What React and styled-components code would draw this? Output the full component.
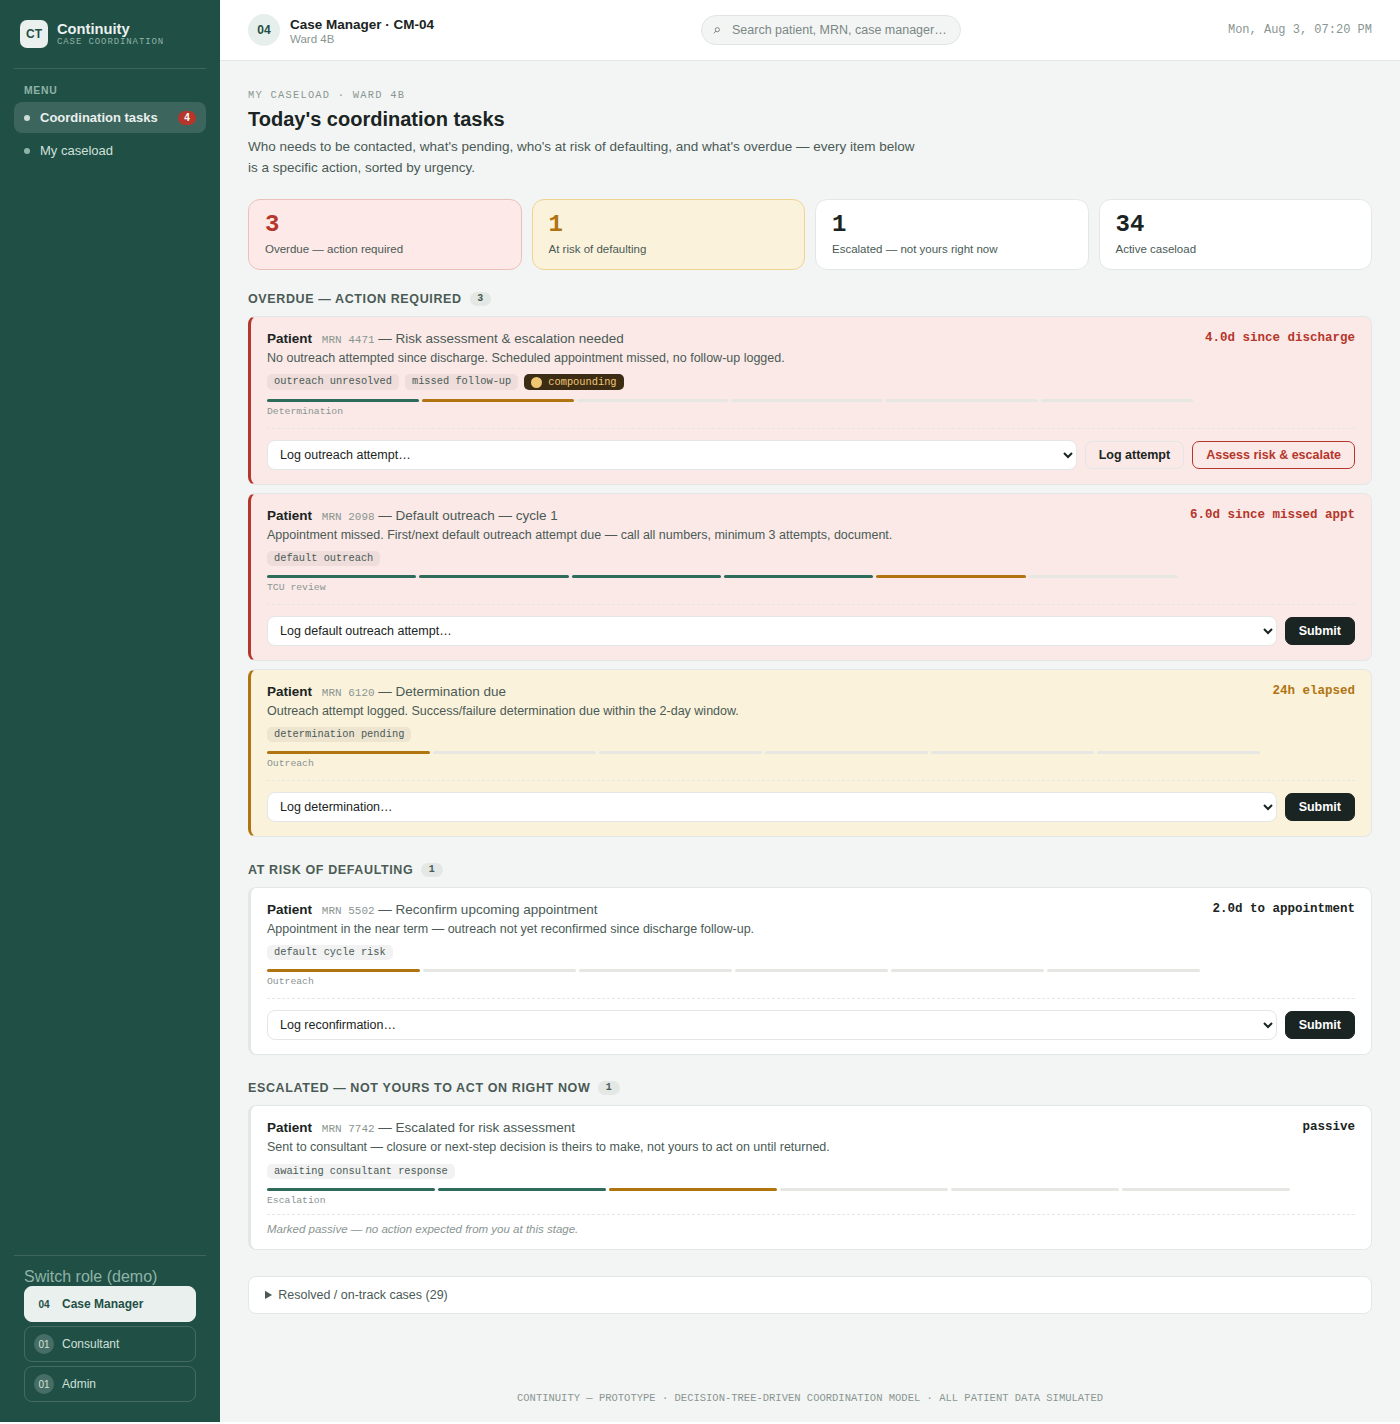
import React from "react";
import styled, { createGlobalStyle } from "styled-components";

const GlobalStyle = createGlobalStyle`
  html, body { margin: 0; padding: 0; background: #fff; }
  body { font-family: "Liberation Sans", Arial, sans-serif; color: #1a2422; }
  * { box-sizing: border-box; }
`;

const mono = `"Liberation Mono", "Courier New", monospace`;

const Shell = styled.div`
  display: flex;
  width: 1400px;
`;

const Sidebar = styled.aside`
  width: 220px;
  flex: none;
  background: #1f4f45;
  display: flex;
  flex-direction: column;
  padding: 20px 14px 20px;
`;

const Brand = styled.div`
  display: flex;
  align-items: center;
  gap: 9px;
  padding: 0 6px 20px;
  border-bottom: 1px solid rgba(255, 255, 255, 0.13);
`;

const Logo = styled.div`
  width: 28px;
  height: 28px;
  border-radius: 7px;
  background: #eaf0ee;
  color: #1f4f45;
  font-weight: 700;
  font-size: 12px;
  display: flex;
  align-items: center;
  justify-content: center;
`;

const BrandName = styled.div`
  color: #eaf0ee;
  font-size: 14.7px;
  font-weight: 700;
  line-height: 16px;
`;

const BrandSub = styled.div`
  font-family: ${mono};
  font-size: 9px;
  letter-spacing: 0.9px;
  color: #8fb3a7;
  line-height: 10px;
`;

const MenuLabel = styled.div`
  font-size: 10.4px;
  font-weight: 700;
  letter-spacing: 0.7px;
  color: #8fb3a7;
  padding: 16px 10px 6px;
`;

const NavItem = styled.div`
  display: flex;
  align-items: center;
  gap: 10px;
  height: 31px;
  padding: 0 10px;
  margin-bottom: 2px;
  border-radius: 8px;
  font-size: 13px;
  font-weight: ${(p) => (p.$active ? 700 : 400)};
  color: ${(p) => (p.$active ? "#eaf0ee" : "#cfe0da")};
  background: ${(p) => (p.$active ? "rgba(255, 255, 255, 0.13)" : "transparent")};
`;

const NavDot = styled.span`
  width: 6px;
  height: 6px;
  border-radius: 50%;
  background: ${(p) => (p.$active ? "#cfdcd7" : "#8fb3a7")};
`;

const NavBadge = styled.span`
  margin-left: auto;
  min-width: 18px;
  height: 14px;
  border-radius: 7px;
  background: #b5362b;
  color: #fff;
  font-size: 10px;
  font-weight: 700;
  display: flex;
  align-items: center;
  justify-content: center;
`;

const RoleSwitch = styled.div`
  margin-top: auto;
  border-top: 1px solid rgba(255, 255, 255, 0.13);
  padding: 12px 10px 0;
`;

const RoleTitle = styled.div`
  font-size: 16px;
  line-height: 18px;
  color: #8fb3a7;
`;

const RoleButton = styled.div`
  display: flex;
  align-items: center;
  gap: 8px;
  height: 36px;
  padding: 0 9px;
  margin-bottom: 4px;
  border-radius: 8px;
  font-size: 12px;
  font-weight: ${(p) => (p.$active ? 700 : 400)};
  color: ${(p) => (p.$active ? "#1f4f45" : "#cfe0da")};
  background: ${(p) => (p.$active ? "#eaf0ee" : "transparent")};
  border: 1px solid ${(p) => (p.$active ? "#eaf0ee" : "rgba(255, 255, 255, 0.16)")};
  &:last-child { margin-bottom: 0; }
`;

const RoleBadge = styled.span`
  width: 20px;
  height: 20px;
  border-radius: 50%;
  font-size: 10px;
  font-weight: ${(p) => (p.$active ? 700 : 400)};
  display: flex;
  align-items: center;
  justify-content: center;
  background: ${(p) => (p.$active ? "transparent" : "rgba(255, 255, 255, 0.18)")};
`;

const Main = styled.div`
  flex: 1;
  min-width: 0;
  background: #f3f5f4;
  display: flex;
  flex-direction: column;
`;

const Topbar = styled.header`
  height: 61px;
  background: #fff;
  border-bottom: 1px solid #e3e7e5;
  display: flex;
  justify-content: space-between;
  align-items: center;
  padding: 0 28px;
`;

const UserBlock = styled.div`
  display: flex;
  align-items: center;
  gap: 10px;
`;

const Avatar = styled.div`
  width: 32px;
  height: 32px;
  border-radius: 50%;
  background: #e7efec;
  color: #1f4f45;
  font-size: 12px;
  font-weight: 700;
  display: flex;
  align-items: center;
  justify-content: center;
`;

const UserName = styled.div`
  font-size: 13.5px;
  font-weight: 700;
  line-height: 17px;
`;

const UserWard = styled.div`
  font-size: 11.5px;
  line-height: 12px;
  color: #8a9592;
`;

const SearchBox = styled.div`
  height: 30px;
  border-radius: 15px;
  border: 1px solid #e0e5e3;
  background: #f3f5f4;
  display: flex;
  align-items: center;
  gap: 12px;
  padding: 0 12px 0 11px;
  width: 260px;
`;

const SearchIcon = styled.svg`
  flex: none;
  width: 7px;
  height: 7px;
  margin-top: 1px;
  fill: none;
  stroke: #7c8784;
  stroke-width: 1;
`;

const SearchInput = styled.input`
  border: 0;
  outline: 0;
  background: transparent;
  flex: 1;
  min-width: 0;
  padding: 0;
  font-family: inherit;
  font-size: 12.5px;
  &::placeholder { color: #7c8784; opacity: 1; }
`;

const DateText = styled.div`
  font-family: ${mono};
  font-size: 12px;
  color: #8a9592;
  text-align: right;
`;

const Content = styled.main`
  padding: 28px 28px 0;
  flex: 1;
  display: flex;
  flex-direction: column;
`;

const Eyebrow = styled.div`
  font-family: ${mono};
  font-size: 10.4px;
  letter-spacing: 1.25px;
  color: #8a9592;
  line-height: 12px;
`;

const Title = styled.h1`
  margin: 5px 0 0;
  font-size: 20px;
  line-height: 26px;
  font-weight: 700;
`;

const Intro = styled.p`
  margin: 4px 0 0;
  max-width: 680px;
  font-size: 13.5px;
  line-height: 21px;
  color: #4a5a55;
`;

const Stats = styled.div`
  display: grid;
  grid-template-columns: repeat(4, 1fr);
  gap: 10px;
  margin-top: 21px;
`;

const tones = {
  red: { bg: "#fde9e7", border: "#ecc0ba", num: "#b5362b" },
  amber: { bg: "#fbf2dc", border: "#efd391", num: "#b07410" },
  plain: { bg: "#fff", border: "#e3e7e5", num: "#1a2422" },
};

const StatCard = styled.div`
  height: 71px;
  border-radius: 12px;
  padding: 12px 16px;
  background: ${(p) => tones[p.$tone].bg};
  border: 1px solid ${(p) => tones[p.$tone].border};
`;

const StatNum = styled.div`
  font-family: ${mono};
  font-size: 24px;
  font-weight: 700;
  line-height: 26px;
  color: ${(p) => tones[p.$tone].num};
`;

const StatLabel = styled.div`
  margin-top: 4px;
  font-size: 11.5px;
  line-height: 14px;
  color: #4a5a55;
`;

const Section = styled.section`
  margin-top: ${(p) => p.$top}px;
`;

const SectionHead = styled.div`
  display: flex;
  align-items: center;
  gap: 8px;
  margin-bottom: 10px;
  height: 15px;
  font-size: 12.5px;
  font-weight: 700;
  letter-spacing: 0.62px;
  text-transform: uppercase;
  color: #4a5a55;
`;

const SectionCount = styled.span`
  height: 14px;
  padding: 0 7.5px;
  border-radius: 7px;
  background: #e3e8e5;
  font-family: ${mono};
  font-size: 10px;
  font-weight: 700;
  line-height: 14px;
`;

const CardList = styled.div`
  display: flex;
  flex-direction: column;
  gap: 8px;
`;

const cardTones = {
  red: { bg: "#fbe9e7", bar: "#b5362b", meta: "#b5362b" },
  amber: { bg: "#fbf2dc", bar: "#b07410", meta: "#b07410" },
  plain: { bg: "#fff", bar: "#e3e7e5", meta: "#1a2422" },
};

const Card = styled.article`
  background: ${(p) => cardTones[p.$tone].bg};
  border: 1px solid #e3e7e5;
  border-left: 3px solid ${(p) => cardTones[p.$tone].bar};
  border-radius: 8px;
  padding: 14px 16px;
`;

const CardTop = styled.div`
  display: flex;
  align-items: flex-start;
  gap: 12px;
`;

const CardBody = styled.div`
  flex: 1;
  min-width: 0;
`;

const CardTitle = styled.div`
  font-size: 13.5px;
  line-height: 16px;
  color: #4a5a55;
  strong { color: #1a2422; font-size: 13.5px; margin-right: 6px; }
`;

const Mrn = styled.span`
  font-family: ${mono};
  font-size: 11px;
  color: #8a9592;
`;

const CardDesc = styled.div`
  margin-top: 2px;
  font-size: 12.5px;
  line-height: 16px;
  color: #4a5a55;
`;

const Tags = styled.div`
  display: flex;
  gap: 6px;
  margin-top: ${(p) => (p.$passive ? 9 : 8)}px;
`;

const Tag = styled.span`
  padding: 0 7px;
  border-radius: 5px;
  font-family: ${mono};
  font-size: 10.35px;
  line-height: 15px;
  background: rgba(26, 36, 34, 0.06);
  color: #4a5a55;
`;

const DarkTag = styled(Tag)`
  display: flex;
  align-items: center;
  gap: 6px;
  height: 16px;
  background: #3d2c14;
  color: #f0c674;
`;

const TagDot = styled.i`
  width: 11px;
  height: 11px;
  border-radius: 50%;
  background: #f0c674;
`;

const Steps = styled.div`
  display: flex;
  gap: 3px;
  margin-top: 9px;
`;

const stepColors = { done: "#2f6b5a", now: "#b07410", idle: "#e6e7e3" };

const Step = styled.span`
  flex: 1;
  height: 3px;
  border-radius: 2px;
  background: ${(p) => stepColors[p.$state]};
`;

const StepLabel = styled.div`
  margin-top: 4px;
  font-family: ${mono};
  font-size: 9.75px;
  line-height: 11px;
  color: #8a9592;
`;

const Meta = styled.div`
  flex: none;
  font-family: ${mono};
  font-size: 12.5px;
  font-weight: 700;
  line-height: 14px;
  color: ${(p) => cardTones[p.$tone].meta};
`;

const Actions = styled.div`
  display: flex;
  align-items: center;
  gap: 8px;
  margin-top: 11px;
  padding-top: 11px;
  border-top: 1px dashed #e3e7e5;
`;

const Select = styled.select`
  flex: 1;
  min-width: 0;
  height: 30px;
  padding: 0 8px;
  border: 1px solid #e3e7e5;
  border-radius: 8px;
  background: #fff;
  color: #1a2422;
  font-family: inherit;
  font-size: 12.5px;
`;

const Button = styled.button`
  height: 28px;
  padding: 0 13px;
  border-radius: 7px;
  font-family: inherit;
  font-size: 12.5px;
  font-weight: 700;
  background: transparent;
  color: #1a2422;
  border: 1px solid #e3e7e5;
`;

const DangerButton = styled(Button)`
  color: #b5362b;
  border-color: #b5362b;
`;

const PrimaryButton = styled(Button)`
  background: #1a2422;
  border-color: #1a2422;
  color: #fff;
`;

const PassiveNote = styled.div`
  margin-top: 8px;
  padding-top: 8px;
  border-top: 1px dashed #e3e7e5;
  font-size: 11.5px;
  line-height: 12px;
  font-style: italic;
  color: #8a9592;
`;

const Resolved = styled.details`
  margin-top: 26px;
  background: #fff;
  border: 1px solid #e3e7e5;
  border-radius: 8px;
  padding: 11px 16px;
  font-size: 12.5px;
  line-height: 14px;
  color: #4a5a55;
`;

const Footer = styled.footer`
  margin-top: 78px;
  padding-bottom: 18px;
  text-align: center;
  font-family: ${mono};
  font-size: 10.5px;
  line-height: 12px;
  color: #8a9592;
`;

function Progress({ states, label }) {
  return (
    <>
      <Steps>
        {states.split("").map((c, i) => (
          <Step key={i} $state={c === "d" ? "done" : c === "n" ? "now" : "idle"} />
        ))}
      </Steps>
      <StepLabel>{label}</StepLabel>
    </>
  );
}

function TaskCard({ tone, mrn, task, desc, tags, dark, states, step, meta, prompt, children }) {
  return (
    <Card $tone={tone}>
      <CardTop>
        <CardBody>
          <CardTitle>
            <strong>Patient</strong> <Mrn>MRN {mrn}</Mrn> — {task}
          </CardTitle>
          <CardDesc>{desc}</CardDesc>
          <Tags $passive={!prompt}>
            {tags.map((t) => (
              <Tag key={t}>{t}</Tag>
            ))}
            {dark && (
              <DarkTag>
                <TagDot />
                {dark}
              </DarkTag>
            )}
          </Tags>
          <Progress states={states} label={step} />
        </CardBody>
        <Meta $tone={tone}>{meta}</Meta>
      </CardTop>
      {prompt ? (
        <Actions>
          <Select defaultValue="">
            <option value="">{prompt}</option>
          </Select>
          {children || <PrimaryButton>Submit</PrimaryButton>}
        </Actions>
      ) : (
        children
      )}
    </Card>
  );
}

export default function App() {
  return (
    <Shell>
      <GlobalStyle />
      <Sidebar>
        <Brand>
          <Logo>CT</Logo>
          <div>
            <BrandName>Continuity</BrandName>
            <BrandSub>CASE COORDINATION</BrandSub>
          </div>
        </Brand>
        <MenuLabel>MENU</MenuLabel>
        <NavItem $active>
          <NavDot $active />
          Coordination tasks
          <NavBadge>4</NavBadge>
        </NavItem>
        <NavItem>
          <NavDot />
          My caseload
        </NavItem>
        <RoleSwitch>
          <RoleTitle>Switch role (demo)</RoleTitle>
          <RoleButton $active>
            <RoleBadge $active>04</RoleBadge>
            Case Manager
          </RoleButton>
          <RoleButton>
            <RoleBadge>01</RoleBadge>
            Consultant
          </RoleButton>
          <RoleButton>
            <RoleBadge>01</RoleBadge>
            Admin
          </RoleButton>
        </RoleSwitch>
      </Sidebar>
      <Main>
        <Topbar>
          <UserBlock>
            <Avatar>04</Avatar>
            <div>
              <UserName>Case Manager · CM-04</UserName>
              <UserWard>Ward 4B</UserWard>
            </div>
          </UserBlock>
          <SearchBox>
            <SearchIcon viewBox="0 0 7 7">
              <circle cx="4.3" cy="2.7" r="2.1" />
              <path d="M2.8 4.2 L0.8 6.4" />
            </SearchIcon>
            <SearchInput placeholder="Search patient, MRN, case manager…" />
          </SearchBox>
          <DateText>Mon, Aug 3, 07:20 PM</DateText>
        </Topbar>
        <Content>
          <Eyebrow>MY CASELOAD · WARD 4B</Eyebrow>
          <Title>Today's coordination tasks</Title>
          <Intro>
            Who needs to be contacted, what's pending, who's at risk of defaulting, and what's overdue — every item below is a specific action, sorted by urgency.
          </Intro>
          <Stats>
            <StatCard $tone="red">
              <StatNum $tone="red">3</StatNum>
              <StatLabel>Overdue — action required</StatLabel>
            </StatCard>
            <StatCard $tone="amber">
              <StatNum $tone="amber">1</StatNum>
              <StatLabel>At risk of defaulting</StatLabel>
            </StatCard>
            <StatCard $tone="plain">
              <StatNum $tone="plain">1</StatNum>
              <StatLabel>Escalated — not yours right now</StatLabel>
            </StatCard>
            <StatCard $tone="plain">
              <StatNum $tone="plain">34</StatNum>
              <StatLabel>Active caseload</StatLabel>
            </StatCard>
          </Stats>

          <Section $top={21}>
            <SectionHead>
              Overdue — action required <SectionCount>3</SectionCount>
            </SectionHead>
            <CardList>
              <TaskCard
                tone="red"
                mrn="4471"
                task="Risk assessment & escalation needed"
                desc="No outreach attempted since discharge. Scheduled appointment missed, no follow-up logged."
                tags={["outreach unresolved", "missed follow-up"]}
                dark="compounding"
                states="dniiii"
                step="Determination"
                meta="4.0d since discharge"
                prompt="Log outreach attempt…"
              >
                <Button>Log attempt</Button>
                <DangerButton>Assess risk & escalate</DangerButton>
              </TaskCard>
              <TaskCard
                tone="red"
                mrn="2098"
                task="Default outreach — cycle 1"
                desc="Appointment missed. First/next default outreach attempt due — call all numbers, minimum 3 attempts, document."
                tags={["default outreach"]}
                states="ddddni"
                step="TCU review"
                meta="6.0d since missed appt"
                prompt="Log default outreach attempt…"
              />
              <TaskCard
                tone="amber"
                mrn="6120"
                task="Determination due"
                desc="Outreach attempt logged. Success/failure determination due within the 2-day window."
                tags={["determination pending"]}
                states="niiiii"
                step="Outreach"
                meta="24h elapsed"
                prompt="Log determination…"
              />
            </CardList>
          </Section>

          <Section $top={25}>
            <SectionHead>
              At risk of defaulting <SectionCount>1</SectionCount>
            </SectionHead>
            <CardList>
              <TaskCard
                tone="plain"
                mrn="5502"
                task="Reconfirm upcoming appointment"
                desc="Appointment in the near term — outreach not yet reconfirmed since discharge follow-up."
                tags={["default cycle risk"]}
                states="niiiii"
                step="Outreach"
                meta="2.0d to appointment"
                prompt="Log reconfirmation…"
              />
            </CardList>
          </Section>

          <Section $top={25}>
            <SectionHead>
              Escalated — not yours to act on right now <SectionCount>1</SectionCount>
            </SectionHead>
            <CardList>
              <TaskCard
                tone="plain"
                mrn="7742"
                task="Escalated for risk assessment"
                desc="Sent to consultant — closure or next-step decision is theirs to make, not yours to act on until returned."
                tags={["awaiting consultant response"]}
                states="ddniii"
                step="Escalation"
                meta="passive"
              >
                <PassiveNote>Marked passive — no action expected from you at this stage.</PassiveNote>
              </TaskCard>
            </CardList>
          </Section>

          <Resolved>
            <summary>Resolved / on-track cases (29)</summary>
          </Resolved>
          <Footer>CONTINUITY — PROTOTYPE · DECISION-TREE-DRIVEN COORDINATION MODEL · ALL PATIENT DATA SIMULATED</Footer>
        </Content>
      </Main>
    </Shell>
  );
}
